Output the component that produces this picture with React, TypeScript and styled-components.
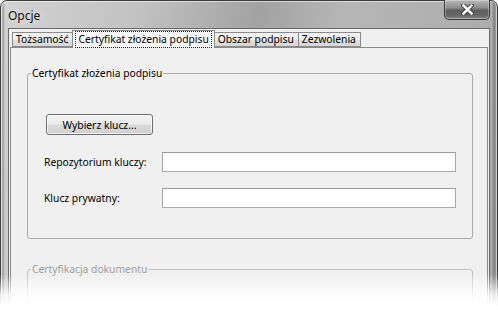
import React from "react";
import styled, { createGlobalStyle } from "styled-components";

const GlobalStyle = createGlobalStyle`
  html, body {
    margin: 0;
    padding: 0;
    background: #fff;
  }
  body {
    font-family: "Noto Sans", "DejaVu Sans", sans-serif;
    font-size: 10.3px;
    color: #000;
  }
`;

const Stage = styled.div`
  position: relative;
  width: 498px;
  height: 320px;
  overflow: hidden;
  background: #fff;
`;

// Window frame (grey glass)
const Window = styled.div`
  box-sizing: border-box;
  width: 498px;
  height: 340px;
  display: flex;
  flex-direction: column;
  padding: 0 7px;
  border: 1px solid #3c3c3c;
  border-radius: 7px 7px 0 0;
  background: linear-gradient(
      90deg,
      rgba(0, 0, 0, 0) 0px,
      rgba(60, 60, 60, 0.35) 2px,
      rgba(0, 0, 0, 0) 4px,
      rgba(0, 0, 0, 0) calc(100% - 5px),
      rgba(60, 60, 60, 0.4) calc(100% - 3px),
      rgba(0, 0, 0, 0) 100%
    ),
    linear-gradient(
      100deg,
      #d2d2d2 0%,
      #c2c2c2 25%,
      #a2a2a2 47%,
      #b6b6b6 62%,
      #a9a9a9 100%
    );
  box-shadow: inset 1px 1px 0 rgba(255, 255, 255, 0.55),
    inset -1px 0 0 rgba(255, 255, 255, 0.45);
`;

const TitleBar = styled.div`
  display: flex;
  justify-content: space-between;
  align-items: flex-start;
  height: 27px;
  flex-shrink: 0;
`;

const Title = styled.div`
  margin-top: 7px;
  font-size: 12px;
  line-height: 15px;
  color: #111;
  text-shadow: 0 0 6px rgba(255, 255, 255, 0.7);
`;

const CloseButton = styled.div`
  box-sizing: border-box;
  width: 46px;
  height: 20px;
  margin-top: -1px;
  display: flex;
  align-items: center;
  justify-content: center;
  border: 1px solid #3a3a3a;
  border-top: none;
  border-radius: 0 0 5px 5px;
  background: linear-gradient(
    #b8b8b8 0%,
    #8e8e8e 40%,
    #5e5e5e 55%,
    #6a6a6a 85%,
    #8e8e8e 100%
  );
  box-shadow: inset 0 0 0 1px rgba(255, 255, 255, 0.3);
`;

const Client = styled.div`
  flex: 1;
  display: flex;
  flex-direction: column;
  padding: 0 1px;
  border: 1px solid #6a6a6a;
  border-bottom: none;
  background: #f0f0f0;
`;

const TabStrip = styled.div`
  display: flex;
  align-items: flex-end;
  height: 19px;
  margin-bottom: -1px;
  padding-left: 2px;
  position: relative;
  z-index: 1;
`;

const Tab = styled.div<{ $active?: boolean }>`
  box-sizing: border-box;
  display: flex;
  align-items: center;
  height: ${(p) => (p.$active ? "18px" : "15px")};
  margin-bottom: ${(p) => (p.$active ? "0" : "1px")};
  padding: ${(p) => (p.$active ? "0 3px" : "0 4px 0 3px")};
  border: 1px solid #8a8a8a;
  border-bottom: ${(p) => (p.$active ? "none" : "1px solid #8a8a8a")};
  margin-right: -1px;
  line-height: 13px;
  white-space: nowrap;
  background: ${(p) =>
    p.$active
      ? "#f8f8f8"
      : "linear-gradient(#f4f4f4 0%, #ececec 50%, #e0e0e0 51%, #d6d6d6 100%)"};
  position: relative;
  z-index: ${(p) => (p.$active ? 2 : 1)};
`;

const TabFocus = styled.span`
  padding: 1px 2px;
  outline: 1px dotted #222;
  outline-offset: 0;
  line-height: 13px;
`;

const TabPanel = styled.div`
  flex: 1;
  padding: 18px 14px 0 16px;
  border: 1px solid #8a8a8a;
  border-bottom: none;
  background: #f0f0f0;
`;

const Group = styled.fieldset<{ $disabled?: boolean }>`
  margin: 0 0 23px 0;
  padding: 33px 16px 30px 16px;
  border: 1px solid ${(p) => (p.$disabled ? "#c2c2c2" : "#a9a9a9")};
  border-radius: 3px;
  min-width: 0;
  min-height: ${(p) => (p.$disabled ? "60px" : "0")};
`;

const Legend = styled.legend<{ $disabled?: boolean }>`
  margin-left: -13px;
  padding: 0 1px;
  line-height: 15px;
  color: ${(p) => (p.$disabled ? "#a0a0a0" : "#000")};
`;

const Button = styled.button`
  box-sizing: border-box;
  width: 107px;
  height: 21px;
  margin: 0 0 17px 2px;
  padding: 0;
  font: inherit;
  color: #000;
  border: 1px solid #707070;
  border-radius: 3px;
  background: linear-gradient(
    #f3f3f3 0%,
    #ebebeb 48%,
    #dcdcdc 52%,
    #cfcfcf 100%
  );
  box-shadow: inset 0 0 0 1px rgba(255, 255, 255, 0.7);
`;

const FormGrid = styled.div`
  display: grid;
  grid-template-columns: 118px 1fr;
  row-gap: 16px;
  align-items: center;
`;

const Label = styled.label`
  white-space: nowrap;
`;

const TextInput = styled.input`
  box-sizing: border-box;
  width: 100%;
  height: 20px;
  margin: 0;
  padding: 0 3px;
  font: inherit;
  border: 1px solid #a7a7a7;
  border-top-color: #9a9a9a;
  background: #fff;
  outline: none;
`;

const BottomFade = styled.div`
  position: absolute;
  left: 0;
  right: 0;
  bottom: 0;
  height: 46px;
  background: linear-gradient(
    rgba(255, 255, 255, 0) 0%,
    rgba(255, 255, 255, 0.85) 45%,
    #fff 70%
  );
  pointer-events: none;
`;

const tabs = ["Tożsamość", "Certyfikat złożenia podpisu", "Obszar podpisu", "Zezwolenia"];

export default function App() {
  return (
    <Stage>
      <GlobalStyle />
      <Window>
        <TitleBar>
          <Title>Opcje</Title>
          <CloseButton>
            <svg width="13" height="11" viewBox="0 0 13 11">
              <path
                d="M2.5 1.5 L10.5 9.5 M10.5 1.5 L2.5 9.5"
                stroke="#333"
                strokeWidth="4.4"
                strokeLinecap="square"
              />
              <path
                d="M2.5 1.5 L10.5 9.5 M10.5 1.5 L2.5 9.5"
                stroke="#fff"
                strokeWidth="2.6"
                strokeLinecap="square"
              />
            </svg>
          </CloseButton>
        </TitleBar>
        <Client>
          <TabStrip>
            {tabs.map((t, i) =>
              i === 1 ? (
                <Tab key={t} $active>
                  <TabFocus>{t}</TabFocus>
                </Tab>
              ) : (
                <Tab key={t}>{t}</Tab>
              )
            )}
          </TabStrip>
          <TabPanel>
            <Group>
              <Legend>Certyfikat złożenia podpisu</Legend>
              <Button>Wybierz klucz...</Button>
              <FormGrid>
                <Label>Repozytorium kluczy:</Label>
                <TextInput />
                <Label>Klucz prywatny:</Label>
                <TextInput />
              </FormGrid>
            </Group>
            <Group $disabled>
              <Legend $disabled>Certyfikacja dokumentu</Legend>
            </Group>
          </TabPanel>
        </Client>
      </Window>
      <BottomFade />
    </Stage>
  );
}
